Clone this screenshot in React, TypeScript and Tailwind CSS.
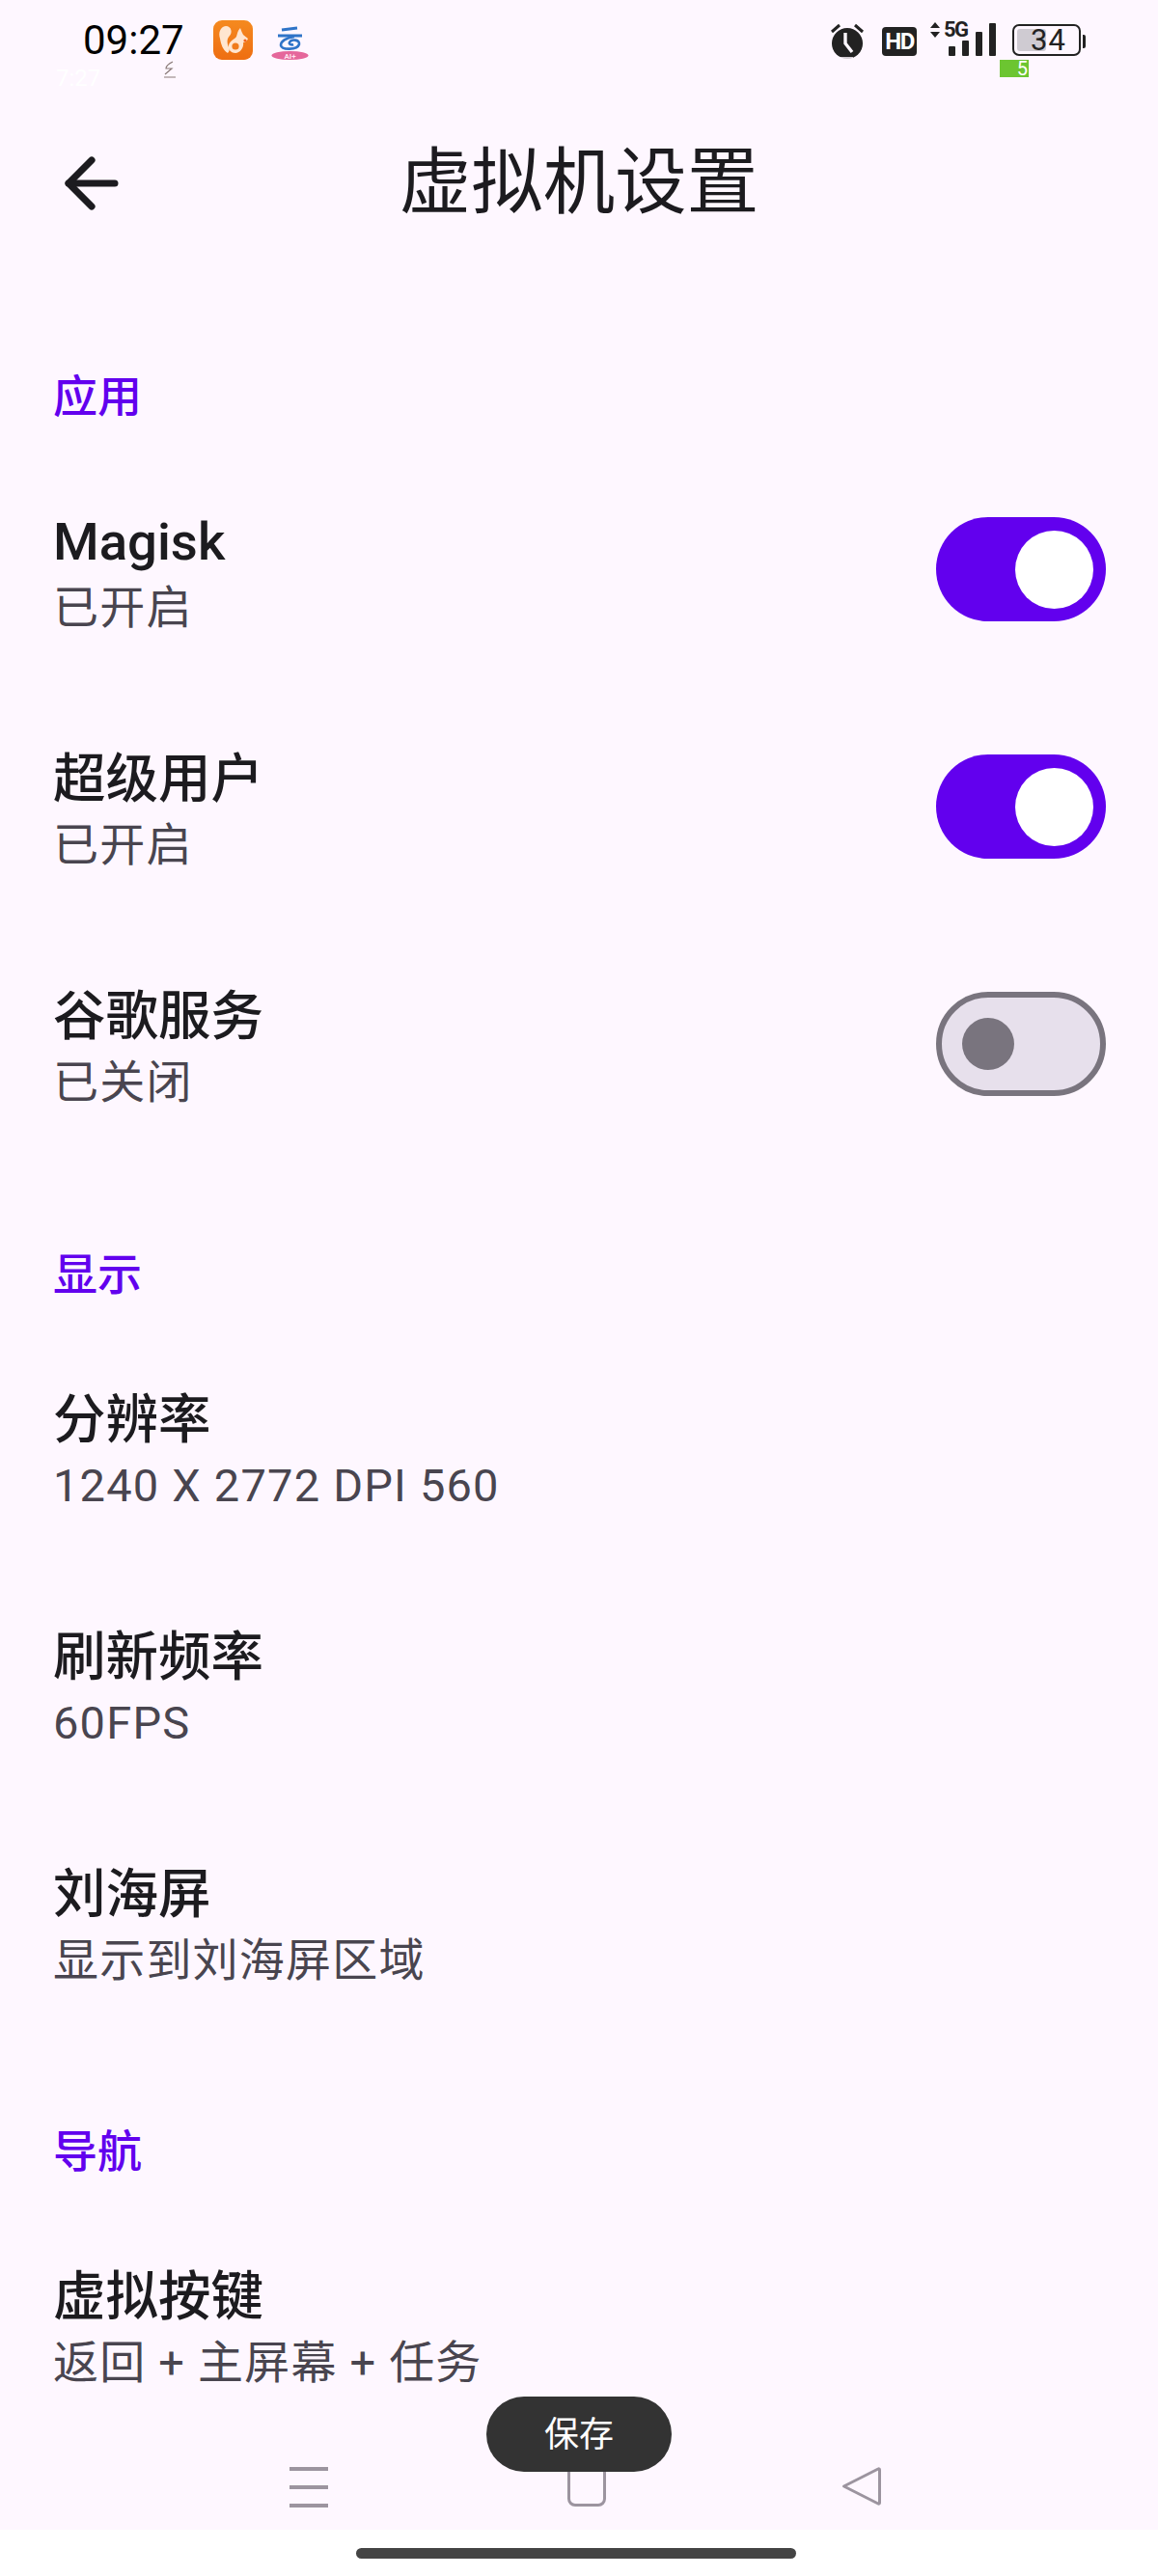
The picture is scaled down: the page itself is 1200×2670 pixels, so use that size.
import { ArrowLeft } from 'lucide-react';

interface SettingRowProps {
  title: string;
  subtitle: string;
  checked?: boolean;
  textClassName?: string;
}

function Toggle({ checked }: { checked: boolean }) {
  if (checked) {
    return (
      <div className="flex h-[108px] w-[176px] items-center justify-end rounded-full bg-[#6200EE] pr-[13px]">
        <div className="h-[81px] w-[81px] rounded-full bg-white" />
      </div>
    );
  }
  return (
    <div className="flex h-[108px] w-[176px] items-center rounded-full border-[6px] border-[#79747E] bg-[#E7E0EC] pl-[21px]">
      <div className="h-[54px] w-[54px] rounded-full bg-[#79747E]" />
    </div>
  );
}

function SettingRow({ title, subtitle, checked, textClassName = 'pt-[3px]' }: SettingRowProps) {
  return (
    <div className="flex h-[246px] items-center justify-between pl-[55px] pr-[54px]">
      <div className={`flex flex-col ${textClassName}`}>
        <span className="text-[54.5px] leading-[69px] font-medium text-[#1C1B1F]">{title}</span>
        <span className="text-[47px] leading-[68px] tracking-[1.2px] text-[#49454F]">{subtitle}</span>
      </div>
      {checked !== undefined && <Toggle checked={checked} />}
    </div>
  );
}

function SectionHeader({ label, className = '' }: { label: string; className?: string }) {
  return (
    <div className={`px-[55px] text-[46px] leading-[60px] font-medium text-[#6200EE] ${className}`}>
      {label}
    </div>
  );
}

function StatusBar() {
  return (
    <div className="relative h-[100px] shrink-0">
      {/* 左侧：时间和通知图标 */}
      <span className="absolute left-[58px] top-[67px] text-[24px] leading-[28px] text-white">7:27</span>
      <span className="absolute left-[86px] top-[22px] text-[42px] leading-[40px] text-black">09:27</span>
      <svg className="absolute left-[168px] top-[63px]" width="16" height="18" viewBox="0 0 16 18">
        <path d="M11 1C7 3 4 6 4 8h6L3 14M2 17h12" fill="none" stroke="#8a7a78" strokeWidth="1.2" />
      </svg>
      <svg className="absolute left-[221px] top-[21px]" width="41" height="41" viewBox="0 0 41 41">
        <defs>
          <linearGradient id="ucBg" x1="0" y1="0" x2="0" y2="1">
            <stop offset="0" stopColor="#F58A1F" />
            <stop offset="1" stopColor="#EE6E12" />
          </linearGradient>
        </defs>
        <rect width="41" height="41" rx="9" fill="url(#ucBg)" />
        <path d="M13 6C7 7 5 13 7 19c1 6 3 12 8 15 2-2 2-4 1-6-2-5-2-9 1-12 3-3 2-10-4-10Z" fill="#FFE6D0" />
        <path d="M28 8c1 3 2 5 3 7l5 4c-1 3-3 4-5 4 1 5-3 11-8 11-5 0-8-4-7-8 1-5 6-6 8-9 1-3 1-6 4-9Z" fill="#FFE6D0" />
        <circle cx="23" cy="27" r="3.6" fill="#F07C1C" />
        <circle cx="33" cy="21" r="1.6" fill="#F0641C" />
      </svg>
      <svg className="absolute left-[281px] top-[27px]" width="39" height="36" viewBox="0 0 39 36">
        <path d="M11 4 27 2M7 10h25" stroke="#2F74C8" strokeWidth="3" fill="none" />
        <path d="M24 11C15 12 10 16 10 20c1 5 17 5 19-1 1-5-8-6-10-2-1 2 2 3 4 2" stroke="#2F74C8" strokeWidth="2.6" fill="none" />
        <ellipse cx="19.5" cy="30.5" rx="19" ry="4.5" fill="#E5679B" />
        <text x="19.5" y="33.5" textAnchor="middle" fontSize="8" fontWeight="700" fill="#FFE3EE">AI+</text>
      </svg>

      {/* 右侧：闹钟、HD、信号、电量 */}
      <svg className="absolute left-[859px] top-[23px]" width="38" height="40" viewBox="0 0 38 40">
        <path d="M3 10l8-7M35 10l-8-7" stroke="#222" strokeWidth="3" fill="none" />
        <circle cx="19" cy="22" r="16" fill="#222" />
        <path d="M17 11v11l7 9" stroke="#FEF7FF" strokeWidth="3.4" fill="none" />
        <path d="M11 37h14" stroke="#FEF7FF" strokeWidth="1.6" fill="none" />
      </svg>
      <div className="absolute left-[914px] top-[28px] flex h-[30px] w-[36px] items-center justify-center rounded-[4px] bg-[#222] text-[24px] leading-none font-bold tracking-[-1.5px] text-white">
        HD
      </div>
      <svg className="absolute left-[963px] top-[22px]" width="12" height="18" viewBox="0 0 12 18">
        <path d="M6 1l5 6H1zM6 17l5-6H1z" fill="#222" />
      </svg>
      <span className="absolute left-[978px] top-[18px] text-[22px] leading-[25px] font-bold tracking-[-1.5px] text-[#222]">5G</span>
      <div className="absolute left-[983px] top-[24px] flex h-[34px] items-end gap-[7px]">
        <div className="h-[10px] w-[7px] rounded-[1px] bg-[#222]" />
        <div className="h-[16px] w-[7px] rounded-[1px] bg-[#222]" />
        <div className="h-[25px] w-[7px] rounded-[1px] bg-[#222]" />
        <div className="h-[34px] w-[7px] rounded-[1px] bg-[#222]" />
      </div>
      <div className="absolute left-[1049px] top-[25px] flex h-[33px] w-[71px] items-center overflow-hidden rounded-[7px] border-2 border-[#222] pl-[3px]">
        <div className="h-[23px] w-[30px] rounded-[3px] bg-[#CFCBD2]" />
      </div>
      <span className="absolute left-[1068px] top-[24px] text-[31px] leading-[36px] tracking-[1px] text-[#222]">34</span>
      <div className="absolute left-[1122px] top-[36px] h-[14px] w-[3px] rounded-r-[2px] bg-[#222]" />
      <div className="absolute left-[1036px] top-[62px] flex h-[18px] w-[30px] items-center justify-end bg-[#6CC531] pr-[1px] text-[20px] leading-none text-white">
        5
      </div>
    </div>
  );
}

export default function App() {
  return (
    <div className="relative flex h-[2670px] w-[1200px] flex-col overflow-hidden bg-white font-['Roboto','Noto_Sans_CJK_SC',sans-serif]">
      <div className="flex h-[2622px] flex-col overflow-hidden bg-[#FEF7FF]">
        <StatusBar />

        <div className="grid h-[180px] shrink-0 grid-cols-[1fr_auto_1fr] items-center">
          <ArrowLeft className="ml-[54px] h-[82px] w-[82px] text-[#1C1B1F]" strokeWidth={2.1} />
          <span className="text-[74.5px] leading-[90px] text-[#1C1B1F]">虚拟机设置</span>
          <div />
        </div>

        <SectionHeader label="应用" className="pt-[101px] pb-[26px]" />
        <SettingRow title="Magisk" subtitle="已开启" checked={true} textClassName="pt-[10px]" />
        <SettingRow title="超级用户" subtitle="已开启" checked={true} textClassName="pt-[10px]" />
        <SettingRow title="谷歌服务" subtitle="已关闭" checked={false} textClassName="pt-[10px]" />

        <SectionHeader label="显示" className="pt-[86px] pb-[30px]" />
        <SettingRow title="分辨率" subtitle="1240 X 2772 DPI 560" />
        <SettingRow title="刷新频率" subtitle="60FPS" />
        <SettingRow title="刘海屏" subtitle="显示到刘海屏区域" />

        <SectionHeader label="导航" className="pt-[81px] pb-[30px]" />
        <SettingRow title="虚拟按键" subtitle="返回 + 主屏幕 + 任务" />
      </div>

      {/* 底部导航按键 */}
      <div className="absolute left-[300px] top-[2557px] flex h-[42px] w-[40px] flex-col justify-between">
        <div className="h-[4px] bg-[#9C949F]" />
        <div className="h-[4px] bg-[#9C949F]" />
        <div className="h-[4px] bg-[#9C949F]" />
      </div>
      <div className="absolute left-[588px] top-[2550px] h-[48px] w-[40px] rounded-[8px] border-[3px] border-[#9C949F]" />
      <svg className="absolute left-[872px] top-[2556px]" width="42" height="42" viewBox="0 0 42 42">
        <path d="M2.5 21 38 3a1 1 0 0 1 1.5 1v34a1 1 0 0 1-1.5 1Z" fill="none" stroke="#9C949F" strokeWidth="3" strokeLinejoin="round" />
      </svg>

      {/* 保存按钮 */}
      <button className="absolute left-[504px] top-[2484px] flex h-[78px] w-[192px] items-center justify-center rounded-full bg-[#333333] pt-[2px] text-[36px] text-white">
        保存
      </button>

      <div className="absolute left-[369px] top-[2641px] h-[11px] w-[456px] rounded-full bg-[#444444]" />
    </div>
  );
}
